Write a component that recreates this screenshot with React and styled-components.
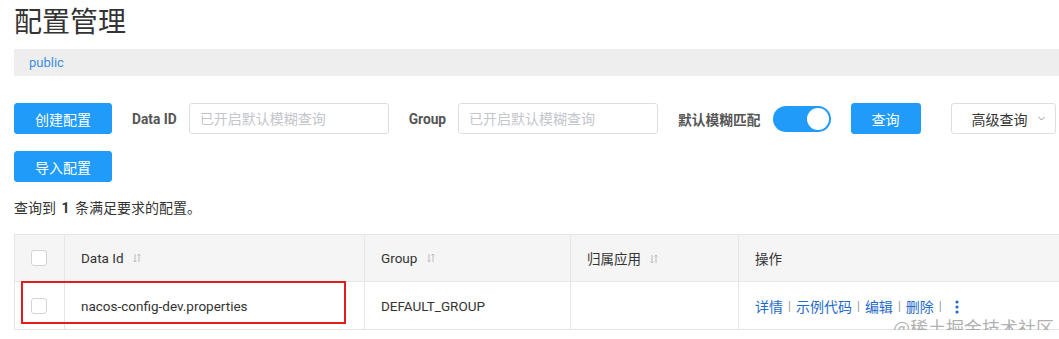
import React from "react";
import styled, { createGlobalStyle } from "styled-components";

const GlobalStyle = createGlobalStyle`
  body {
    margin: 0;
    background: #fff;
    overflow: hidden;
    font-family: Roboto, "Noto Sans CJK SC", sans-serif;
    color: #333;
  }
  * {
    box-sizing: border-box;
  }
`;

const SortIcon = () => (
  <svg width="8" height="10" viewBox="0 0 8 10" fill="none" stroke="#bbb" strokeWidth="1">
    <path d="M2 1v8M0.5 7.5L2 9l1.5-1.5" />
    <path d="M6 9V1M4.5 2.5L6 1l1.5 1.5" />
  </svg>
);

const Chevron = () => (
  <svg width="7" height="5" viewBox="0 0 7 5" fill="none" stroke="#999" strokeWidth="1">
    <path d="M0.5 1l3 3 3-3" />
  </svg>
);

const MoreIcon = () => (
  <svg width="4" height="14" viewBox="0 0 4 14" fill="#1f6acb">
    <circle cx="2" cy="2" r="1.6" />
    <circle cx="2" cy="7" r="1.6" />
    <circle cx="2" cy="12" r="1.6" />
  </svg>
);

const App = () => {
  return (
    <>
      <GlobalStyle />
      <Page>
        <Title>配置管理</Title>
        <Breadcrumb>public</Breadcrumb>

        <Toolbar>
          <Button $primary>创建配置</Button>
          <FormItem>
            <Label>Data ID</Label>
            <Input placeholder="已开启默认模糊查询" />
          </FormItem>
          <FormItem>
            <Label>Group</Label>
            <Input placeholder="已开启默认模糊查询" />
          </FormItem>
          <FormItem>
            <Label>默认模糊匹配</Label>
            <Switch $on />
          </FormItem>
          <Button $primary>查询</Button>
          <ButtonGroup>
            <Button $dropdown>
              高级查询
              <Chevron />
            </Button>
            <Button $blank aria-label="more" />
          </ButtonGroup>
        </Toolbar>

        <Toolbar $second>
          <Button $primary>导入配置</Button>
        </Toolbar>

        <Summary>
          查询到 <strong>1</strong> 条满足要求的配置。
        </Summary>

        <TableWrap>
          <Table>
            <colgroup>
              <col style={{ width: 50 }} />
              <col style={{ width: 300 }} />
              <col style={{ width: 206 }} />
              <col style={{ width: 168 }} />
              <col />
            </colgroup>
            <thead>
              <tr>
                <Th>
                  <Checkbox />
                </Th>
                <Th>
                  Data Id <SortIcon />
                </Th>
                <Th>
                  Group <SortIcon />
                </Th>
                <Th>
                  归属应用 <SortIcon />
                </Th>
                <Th>操作</Th>
              </tr>
            </thead>
            <tbody>
              <tr>
                <Td>
                  <Checkbox />
                </Td>
                <Td>nacos-config-dev.properties</Td>
                <Td>DEFAULT_GROUP</Td>
                <Td></Td>
                <Td>
                  <Actions>
                    <Link>详情</Link>
                    <Sep>|</Sep>
                    <Link>示例代码</Link>
                    <Sep>|</Sep>
                    <Link>编辑</Link>
                    <Sep>|</Sep>
                    <Link>删除</Link>
                    <Sep>|</Sep>
                    <More>
                      <MoreIcon />
                    </More>
                  </Actions>
                </Td>
              </tr>
            </tbody>
          </Table>
          <Highlight />
        </TableWrap>

        <Watermark>@稀土掘金技术社区</Watermark>
      </Page>
    </>
  );
};

export default App;

const Page = styled.div`
  position: relative;
  width: 1160px;
  padding-left: 14px;
`;

const Title = styled.h1`
  margin: 3px 0 0;
  font-size: 28px;
  line-height: 40px;
  font-weight: 400;
  color: #333;
`;

const Breadcrumb = styled.div`
  margin-top: 6px;
  height: 27px;
  display: flex;
  align-items: center;
  padding-left: 15px;
  background: #eeeeee;
  font-size: 13px;
  color: #3d8fe0;
`;

const Toolbar = styled.div`
  display: flex;
  align-items: center;
  gap: 20px;
  margin-top: ${(p) => (p.$second ? "17px" : "27px")};
`;

const Button = styled.button`
  height: 31px;
  width: ${(p) => (p.$blank ? "60px" : "auto")};
  display: inline-flex;
  align-items: center;
  gap: 10px;
  padding: ${(p) => (p.$dropdown ? "0 10px 0 20px" : "0 20px")};
  border: 1px solid ${(p) => (p.$primary ? "#209bfa" : "#dcdee3")};
  border-radius: 3px;
  background: ${(p) => (p.$primary ? "#209bfa" : "#fff")};
  color: ${(p) => (p.$primary ? "#fff" : "#333")};
  font-family: inherit;
  font-size: 14px;
  white-space: nowrap;
  cursor: pointer;
`;

const ButtonGroup = styled.div`
  display: flex;
  gap: 3px;
  margin-left: 10px;
`;

const FormItem = styled.label`
  display: flex;
  align-items: center;
  gap: 12px;
`;

const Label = styled.span`
  font-size: 13.75px;
  font-weight: 700;
  color: #555;
  white-space: nowrap;
`;

const Input = styled.input`
  width: 200px;
  height: 31px;
  padding: 0 10px;
  border: 1px solid #dcdee3;
  border-radius: 3px;
  font-family: inherit;
  font-size: 14px;
  color: #333;
  outline: none;
  &::placeholder {
    color: #c4c6cc;
  }
`;

const Switch = styled.span`
  position: relative;
  width: 58px;
  height: 26px;
  border-radius: 13px;
  background: ${(p) => (p.$on ? "#209bfa" : "#ccc")};
  &::after {
    content: "";
    position: absolute;
    top: 2px;
    right: 2px;
    width: 22px;
    height: 22px;
    border-radius: 50%;
    background: #fff;
  }
`;

const Summary = styled.div`
  margin-top: 16px;
  font-size: 14px;
  line-height: 20px;
  color: #333;
  strong {
    font-weight: 700;
    margin: 0 2px;
  }
`;

const TableWrap = styled.div`
  position: relative;
  margin-top: 16px;
`;

const Table = styled.table`
  width: 1146px;
  border-collapse: collapse;
  table-layout: fixed;
`;

const Th = styled.th`
  height: 47px;
  padding: 0 0 0 16px;
  border: 1px solid #e6e6e6;
  background: #f5f5f5;
  font-size: 13.5px;
  font-weight: 400;
  color: #333;
  text-align: left;
  white-space: nowrap;
  svg {
    margin-left: 6px;
  }
`;

const Td = styled.td`
  height: 48px;
  padding: 0 0 0 16px;
  border: 1px solid #e6e6e6;
  font-size: 13.5px;
  color: #333;
  white-space: nowrap;
`;

const Checkbox = styled.span`
  display: block;
  width: 16px;
  height: 16px;
  border: 1px solid #d4d4d4;
  border-radius: 3px;
  background: #fff;
`;

const Actions = styled.div`
  display: flex;
  align-items: center;
  font-size: 14px;
`;

const Link = styled.a`
  color: #1f6acb;
  cursor: pointer;
`;

const Sep = styled.span`
  margin: 0 5px;
  color: #999;
  font-size: 12px;
`;

const More = styled.span`
  display: flex;
  margin-left: 8px;
  margin-top: 2px;
`;

const Highlight = styled.div`
  position: absolute;
  left: 7px;
  top: 47px;
  width: 325px;
  height: 43px;
  border: 2px solid #e31c1c;
  pointer-events: none;
`;

const Watermark = styled.div`
  position: absolute;
  left: 893px;
  top: 313px;
  font-family: "Noto Sans CJK SC", serif;
  font-size: 18px;
  line-height: 22px;
  color: rgba(150, 150, 150, 0.75);
  pointer-events: none;
`;
